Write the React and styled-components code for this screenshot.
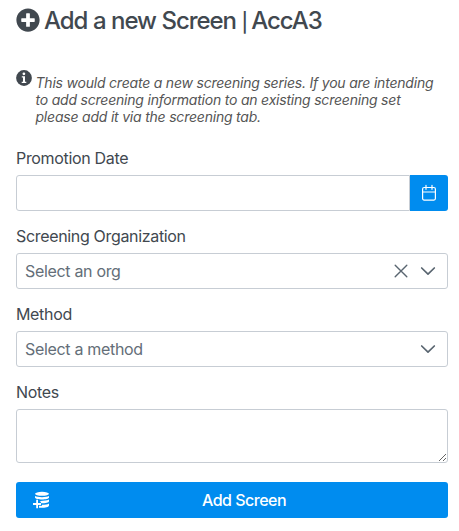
import React from 'react';
import styled, { createGlobalStyle } from 'styled-components';
import { FaPlusCircle } from 'react-icons/fa';

const GlobalStyle = createGlobalStyle`
  * { box-sizing: border-box; }
  body { margin: 0; background: #fff; color: #495057; font: 16px/20px Inter, "Liberation Sans", sans-serif; }
`;

const Form = styled.form`
  display: flex;
  flex-direction: column;
  width: 459px;
  padding: 6px 11px 0 16px;
  color: #41484f;
`;

const Heading = styled.h1`
  display: flex;
  align-items: center;
  gap: 4px;
  height: 28px;
  margin: 0;
  font-size: 24px;
  line-height: 28px;
  font-weight: 550;
  letter-spacing: -1.05px;
  word-spacing: 0.2px;
  white-space: nowrap;
  svg { flex: none; }
`;

const HeadingText = styled.span`
  padding-top: 2px;
`;

const Divider = styled.span`
  font-size: 19px;
  line-height: 20px;
  letter-spacing: -2.4px;
`;

const Hint = styled.div`
  display: flex;
  gap: 3.5px;
  height: 55px;
  margin-top: 36px;
  svg { flex: none; }
`;

const HintText = styled.p`
  margin: 4px 0 0;
  color: #555;
  font-size: 14px;
  font-style: italic;
  line-height: 17px;
  letter-spacing: -0.21px;
  white-space: nowrap;
`;

const Field = styled.div`
  display: flex;
  flex-direction: column;
  height: ${({ $tall }) => ($tall ? 72 : 54)}px;
  margin-top: ${({ $first }) => ($first ? 32 : 24)}px;
`;

const Label = styled.label`
  height: 18px;
  margin-top: -8px;
  margin-bottom: 8px;
  line-height: 18px;
  letter-spacing: -0.33px;
`;

const Control = styled.div`
  display: flex;
  align-items: center;
  width: 432px;
  height: 36px;
  padding: 0 11px 0 8px;
  border: 1px solid #c7cdd4;
  border-radius: 3px;
  color: #646e78;
`;

const Placeholder = styled.span`
  flex: 1;
  letter-spacing: -0.32px;
`;

const DateRow = styled.div`
  display: flex;
  width: 432px;
`;

const DateInput = styled.input`
  flex: 1;
  min-width: 0;
  height: 36px;
  border: 1px solid #c7cdd4;
  border-radius: 3px 0 0 3px;
  outline: none;
`;

const DateButton = styled.button`
  display: grid;
  place-items: center;
  width: 38px;
  height: 36px;
  padding: 0;
  border: 0;
  border-radius: 0 3px 3px 0;
  background: #008cef;
`;

const Notes = styled.textarea`
  display: block;
  width: 432px;
  height: 54px;
  border: 1px solid #c7cdd4;
  border-radius: 3px;
  outline: none;
`;

const Submit = styled.button`
  display: flex;
  align-items: center;
  width: 432px;
  height: 36px;
  margin-top: 19px;
  padding: 0 10px 0 16px;
  border: 0;
  border-radius: 3px;
  background: #008cef;
  color: #fff;
  font: 500 16px/20px Inter, sans-serif;
  letter-spacing: -0.5px;
`;

const SubmitLabel = styled.span`
  flex: 1;
  text-align: center;
`;

const InfoIcon = () => (
  <svg width="16" height="16" viewBox="0 0 16 16">
    <circle cx="8" cy="8" r="7.9" fill="#41484f" />
    <circle cx="7.9" cy="3.8" r="1.35" fill="#fff" />
    <path d="M5.8 6.2H9v5.6h1.3V13H5.7v-1.2H7V7.4H5.8z" fill="#fff" />
  </svg>
);

const Chevron = () => (
  <svg width="16" height="16" viewBox="0 0 16 16" fill="none" stroke="#596570" strokeWidth="1.7" strokeLinecap="round" strokeLinejoin="round">
    <path d="M1.7 5 8 11.2 14.3 5" />
  </svg>
);

const Clear = styled.svg`
  margin-right: 12px;
`;

const CalendarIcon = () => (
  <svg width="16" height="18" viewBox="0 0 16 18" fill="none" stroke="#fff" strokeWidth="1.2" strokeLinecap="round">
    <rect x="1.6" y="3.5" width="12.8" height="12.6" rx="1.5" />
    <path d="M1.6 8h12.8M5 1.3v4M11 1.3v4" />
  </svg>
);

const DatabaseAddIcon = () => (
  <svg width="18" height="18" viewBox="0 0 18 18" fill="#fff">
    <ellipse cx="10" cy="2.8" rx="7" ry="2" />
    <path d="M3 5c2.4 1.5 11.6 1.5 14 0v1.5c0 2.6-14 2.6-14 0z" />
    <path d="M7.5 10c3.5.1 7.5-.3 9.5-1.4v1.6c0 1.5-3.5 2-7.8 2-.2-1.1-.8-1.8-1.7-2.2z" />
    <path d="M10 13.8c3 0 5.5-.4 7-1.4v2c0 1.9-5.2 2.6-10 2.3v-1.9h3z" />
    <path d="M4.2 8.7h1.8v3.4h3v1.8H6v3.4H4.2v-3.4H1v-1.8h3.2z" />
  </svg>
);

export default function App() {
  return (
    <>
      <GlobalStyle />
      <Form onSubmit={(e) => e.preventDefault()}>
        <Heading>
          <FaPlusCircle size={24} />
          <HeadingText>Add a new Screen <Divider>|</Divider> AccA3</HeadingText>
        </Heading>
        <Hint>
          <InfoIcon />
          <HintText>
            This would create a new screening series. If you are intending<br />
            to add screening information to an existing screening set<br />
            please add it via the screening tab.
          </HintText>
        </Hint>
        <Field $first>
          <Label htmlFor="date">Promotion Date</Label>
          <DateRow>
            <DateInput id="date" />
            <DateButton type="button" aria-label="Choose date"><CalendarIcon /></DateButton>
          </DateRow>
        </Field>
        <Field>
          <Label>Screening Organization</Label>
          <Control>
            <Placeholder>Select an org</Placeholder>
            <Clear width="14" height="14" viewBox="0 0 14 14" fill="none" stroke="#596570" strokeWidth="1.4" strokeLinecap="round">
              <path d="m1.2 1.2 11.6 11.6M12.8 1.2 1.2 12.8" />
            </Clear>
            <Chevron />
          </Control>
        </Field>
        <Field>
          <Label>Method</Label>
          <Control>
            <Placeholder>Select a method</Placeholder>
            <Chevron />
          </Control>
        </Field>
        <Field $tall>
          <Label htmlFor="notes">Notes</Label>
          <Notes id="notes" />
        </Field>
        <Submit type="submit"><DatabaseAddIcon /><SubmitLabel>Add Screen</SubmitLabel></Submit>
      </Form>
    </>
  );
}
